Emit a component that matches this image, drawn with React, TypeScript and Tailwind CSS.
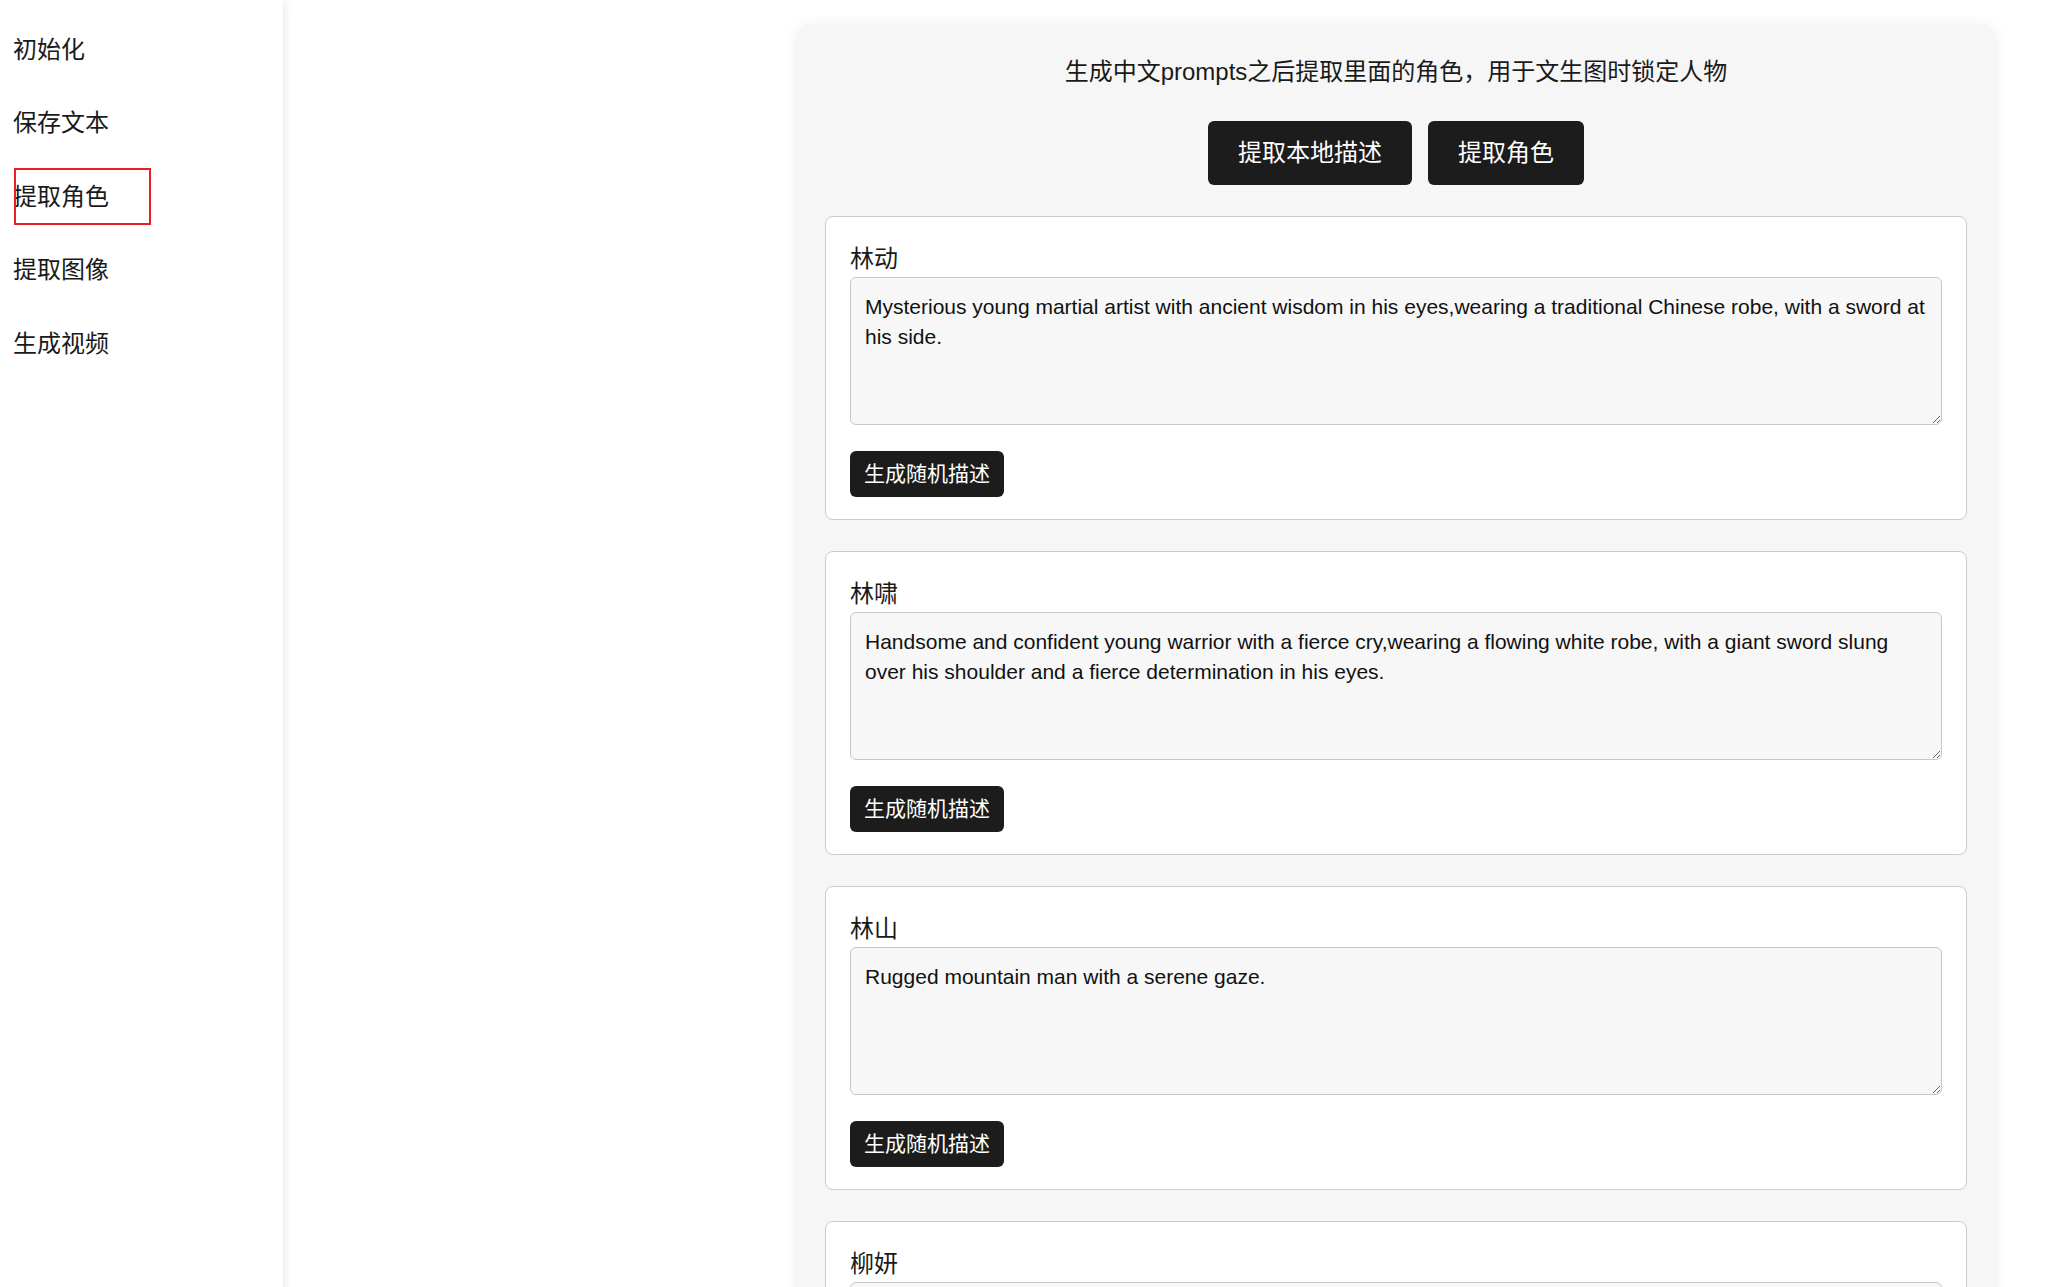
import { useState } from "react";

const FONT = "font-['Liberation_Sans','Noto_Sans_CJK_SC',sans-serif]";

const NAV = ["初始化", "保存文本", "提取角色", "提取图像", "生成视频"];

const ROLES = [
  {
    name: "林动",
    desc: "Mysterious young martial artist with ancient wisdom in his eyes,wearing a traditional Chinese robe, with a sword at his side.",
  },
  {
    name: "林啸",
    desc: "Handsome and confident young warrior with a fierce cry,wearing a flowing white robe, with a giant sword slung over his shoulder and a fierce determination in his eyes.",
  },
  {
    name: "林山",
    desc: "Rugged mountain man with a serene gaze.",
  },
  {
    name: "柳妍",
    desc: "Graceful young woman with gentle eyes and long black hair, wearing a light green dress.",
  },
];

// 角色卡片
function RoleCard({ name, desc }: { name: string; desc: string }) {
  const [text, setText] = useState(desc);
  return (
    <div className="rounded-lg border border-[#c9cbcf] bg-white px-6 pt-6 pb-[22px]">
      <div className="text-[24px] leading-[36px] text-[#1a1a1a]">{name}</div>
      <textarea
        value={text}
        onChange={(e) => setText(e.target.value)}
        className="block h-[148px] w-full rounded-md border border-[#c4c7cc] bg-[#f7f7f7] pt-[14px] pb-[14px] pl-[14px] pr-[10px] text-[21px] leading-[30px] text-[#111] outline-none"
      />
      <button className="mt-[26px] h-[46px] rounded-md bg-[#1c1c1c] px-[14px] text-[21px] text-white">
        生成随机描述
      </button>
    </div>
  );
}

export default function App() {
  const [active, setActive] = useState("提取角色");

  return (
    <div className={`flex min-h-screen bg-white ${FONT}`}>
      {/* 左侧菜单 */}
      <div className="w-[283px] shrink-0 bg-white pl-[13px] pt-[21px] shadow-[3px_0_8px_rgba(0,0,0,0.07)]">
        <div className="flex flex-col gap-[16.5px]">
          {NAV.map((item) => (
            <div
              key={item}
              onClick={() => setActive(item)}
              className="relative flex h-[57px] w-[138px] cursor-pointer items-center text-[24px] text-[#1a1a1a]"
            >
              {item}
              {active === item && (
                <span className="absolute inset-y-0 left-px right-0 border-2 border-[#e81f27]" />
              )}
            </div>
          ))}
        </div>
      </div>

      {/* 右侧内容 */}
      <div className="flex-1 pl-[512px] pt-6 pb-10">
        <div className="w-[1202px] rounded-2xl bg-[#f6f6f6] px-[30px] pt-[30px] pb-8 shadow-[0_0_14px_rgba(0,0,0,0.06)]">
          <div className="text-center text-[24px] leading-[36px] text-[#1a1a1a]">
            生成中文prompts之后提取里面的角色，用于文生图时锁定人物
          </div>
          <div className="mt-[31px] flex justify-center gap-4">
            <button className="h-16 rounded-md bg-[#1c1c1c] px-[30px] text-[24px] text-white">
              提取本地描述
            </button>
            <button className="h-16 rounded-md bg-[#1c1c1c] px-[30px] text-[24px] text-white">
              提取角色
            </button>
          </div>
          <div className="mt-[31px] flex flex-col gap-[31px]">
            {ROLES.map((r) => (
              <RoleCard key={r.name} name={r.name} desc={r.desc} />
            ))}
          </div>
        </div>
      </div>
    </div>
  );
}
